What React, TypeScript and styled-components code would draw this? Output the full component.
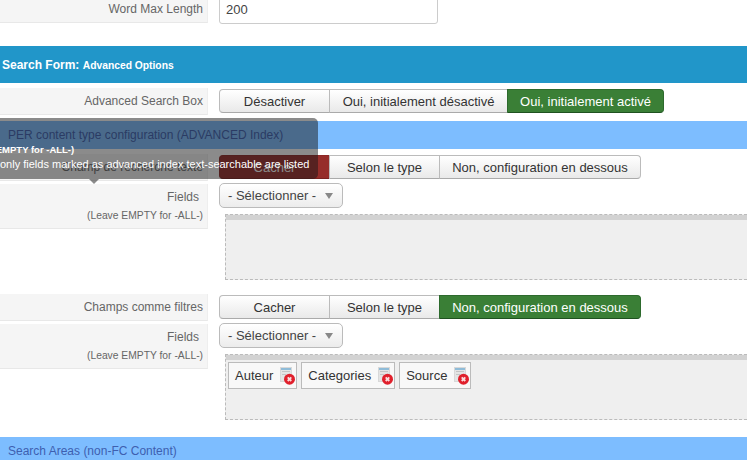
import React from 'react';
import styled, { createGlobalStyle } from 'styled-components';

const Global = createGlobalStyle`
  html, body { margin: 0; padding: 0; background: #fff; height: 100%; overflow: hidden; }
  body { font-family: "Liberation Sans", Arial, sans-serif; font-size: 13px; color: #333; }
`;

const Page = styled.div`
  position: relative;
  width: 747px;
  height: 464px;
  overflow: hidden;
  display: flex;
  flex-direction: column;
  margin-top: -4px;
`;

const Row = styled.div<{ $mt?: number }>`
  display: grid;
  grid-template-columns: 208px 1fr;
  column-gap: 11px;
  margin-top: ${p => p.$mt ?? 0}px;
  align-items: start;
`;

const Label = styled.div<{ $h: number }>`
  height: ${p => p.$h}px;
  box-sizing: border-box;
  background: #f5f5f5;
  border-right: 1px solid #eee;
  border-bottom: 1px solid #e8e8e8;
  color: #666;
  font-size: 12px;
  text-align: right;
  padding-right: 4px;
  line-height: ${p => p.$h - 1}px;
`;

const FieldLabel = styled.div`
  height: 45px;
  box-sizing: border-box;
  background: #f5f5f5;
  border-right: 1px solid #eee;
  border-bottom: 1px solid #e8e8e8;
  color: #666;
  text-align: right;
  padding: 6px 4px 0 0;
  font-size: 12px;
  line-height: 14px;
`;

const FieldName = styled.div`
  padding-right: 4px;
`;

const Hint = styled.div`
  font-size: 10.3px;
  margin-top: 6px;
  line-height: 12px;
`;

const TextInput = styled.div`
  width: 219px;
  height: 28px;
  box-sizing: border-box;
  border: 1px solid #ccc;
  border-radius: 3px;
  background: #fff;
  color: #444;
  font-size: 13px;
  line-height: 25px;
  padding-left: 6px;
`;

const Head = styled.div`
  margin-top: 22px;
  height: 37px;
  flex: none;
  background: #2196c9;
  color: #fff;
  font-weight: bold;
  font-size: 12px;
  line-height: 38px;
  padding-left: 2px;
  small { font-size: 10.3px; }
`;

const SubHead = styled.div<{ $mt: number; $h: number }>`
  margin-top: ${p => p.$mt}px;
  height: ${p => p.$h}px;
  line-height: ${p => p.$h}px;
  flex: none;
  background: #7dbdff;
  color: #3e5fb0;
  font-size: 12px;
  padding-left: 8px;
`;

const Group = styled.div`
  display: flex;
  height: 24px;
  margin-top: 1px;
`;

const Toggle = styled.div<{ $w: number; $tone?: 'green' | 'red' }>`
  width: ${p => p.$w}px;
  box-sizing: border-box;
  height: 24px;
  text-align: center;
  font-size: 13px;
  line-height: 23px;
  color: ${p => (p.$tone ? '#fff' : '#333')};
  border: 1px solid ${p => (p.$tone === 'green' ? '#2d6a2d' : p.$tone === 'red' ? '#8d2826' : '#bbb')};
  border-bottom-color: ${p => (p.$tone === 'green' ? '#1f5220' : p.$tone === 'red' ? '#7a2220' : '#aaa')};
  margin-left: -1px;
  background: ${p =>
    p.$tone === 'green'
      ? '#3a7f36'
      : p.$tone === 'red'
      ? '#962d2a'
      : 'linear-gradient(#fff, #e9e9e9)'};
  &:first-child { margin-left: 0; border-radius: 4px 0 0 4px; }
  &:last-child { border-radius: 0 4px 4px 0; }
`;

const Select = styled.div`
  width: 124px;
  height: 25px;
  box-sizing: border-box;
  border: 1px solid #bbb;
  border-radius: 5px;
  background: linear-gradient(#fff, #ececec);
  color: #444;
  font-size: 13px;
  line-height: 23px;
  padding-left: 8px;
  display: flex;
  align-items: center;
  gap: 9px;
  margin-top: -1px;
  &::after {
    content: '';
    border-left: 4px solid transparent;
    border-right: 4px solid transparent;
    border-top: 6px solid #888;
  }
`;

const Control = styled.div`
  display: flex;
  flex-direction: column;
  min-width: 0;
`;

const Drop = styled.div`
  margin: 6px 0 0 6px;
  height: 66px;
  box-sizing: border-box;
  border: 1px dashed #bbb;
  border-right: 0;
  background: #efefef;
  &::before {
    content: '';
    display: block;
    height: 5px;
    background: #d2d2d2;
  }
`;

const Tags = styled.div`
  display: flex;
  gap: 4px;
  padding: 2px 0 0 2px;
`;

const Tag = styled.div`
  display: flex;
  align-items: center;
  gap: 7px;
  height: 27px;
  box-sizing: border-box;
  background: #f8f8f8;
  border: 1px solid #bbb;
  padding: 0 1px 0 6px;
  color: #333;
  font-size: 13px;
`;

const Tip = styled.div`
  position: absolute;
  left: -37px;
  top: 122px;
  width: 355px;
  height: 61px;
  box-sizing: border-box;
  background: rgba(23, 23, 23, 0.5);
  border-radius: 5px;
  color: #fff;
  font-size: 11px;
  white-space: nowrap;
  padding: 26px 0 0 0;
  &::after {
    content: '';
    position: absolute;
    left: 126px;
    top: 61px;
    border-left: 5px solid transparent;
    border-right: 5px solid transparent;
    border-top: 5px solid rgba(23, 23, 23, 0.5);
  }
`;

const TipTitle = styled.div`
  font-weight: bold;
  font-size: 9.5px;
  line-height: 11px;
`;

const TipBody = styled.div`
  margin-top: 2px;
  line-height: 14px;
  padding-left: 37px;
`;

const RemoveIcon = () => (
  <svg width="15" height="18" viewBox="0 0 15 18">
    <rect x="0.5" y="0.5" width="11" height="14" fill="#e4e4e4" stroke="#d8d8d8" />
    <rect x="1" y="1" width="10" height="2" fill="#8fbcd8" />
    <rect x="2" y="4" width="8" height="1" fill="#c4c4c4" />
    <rect x="2" y="7" width="4" height="1" fill="#c4c4c4" />
    <circle cx="9.5" cy="12.2" r="5.5" fill="#e0202c" />
    <path d="M7.7 10.4l3.6 3.6M11.3 10.4l-3.6 3.6" stroke="#fbdcdc" strokeWidth="1.8" />
  </svg>
);

function Toggles({ items, on, tone }: { items: [string, number][]; on?: number; tone?: 'green' | 'red' }) {
  return (
    <Group>
      {items.map(([t, w], i) => (
        <Toggle key={t} $w={w} $tone={i === on ? tone : undefined}>{t}</Toggle>
      ))}
    </Group>
  );
}

const typeItems: [string, number][] = [['Cacher', 111], ['Selon le type', 111], ['Non, configuration en dessous', 202]];

export default function App() {
  return (
    <Page>
      <Global />
      <Row>
        <Label $h={27}>Word Max Length</Label>
        <TextInput>200</TextInput>
      </Row>
      <Head>Search Form: <small>Advanced Options</small></Head>
      <Row $mt={5}>
        <Label $h={27}>Advanced Search Box</Label>
        <Toggles
          items={[['Désactiver', 111], ['Oui, initialement désactivé', 179], ['Oui, initialement activé', 157]]}
          on={2}
          tone="green"
        />
      </Row>
      <SubHead $mt={6} $h={28}>PER content type configuration (ADVANCED Index)</SubHead>
      <Row $mt={5}>
        <Label $h={27}>Champ de recherche texte</Label>
        <Toggles items={typeItems} on={0} tone="red" />
      </Row>
      <Row $mt={3}>
        <FieldLabel><FieldName>Fields</FieldName><Hint>(Leave EMPTY for -ALL-)</Hint></FieldLabel>
        <Control>
          <Select>- Sélectionner -</Select>
          <Drop />
        </Control>
      </Row>
      <Row $mt={14}>
        <Label $h={27}>Champs comme filtres</Label>
        <Toggles items={typeItems} on={2} tone="green" />
      </Row>
      <Row $mt={3}>
        <FieldLabel><FieldName>Fields</FieldName><Hint>(Leave EMPTY for -ALL-)</Hint></FieldLabel>
        <Control>
          <Select>- Sélectionner -</Select>
          <Drop>
            <Tags>
              <Tag>Auteur<RemoveIcon /></Tag>
              <Tag>Categories<RemoveIcon /></Tag>
              <Tag>Source<RemoveIcon /></Tag>
            </Tags>
          </Drop>
        </Control>
      </Row>
      <SubHead $mt={17} $h={28}>Search Areas (non-FC Content)</SubHead>
      <Tip>
        <TipTitle>(Leave EMPTY for -ALL-)</TipTitle>
        <TipBody>only fields marked as advanced index text-searchable are listed</TipBody>
      </Tip>
    </Page>
  );
}
